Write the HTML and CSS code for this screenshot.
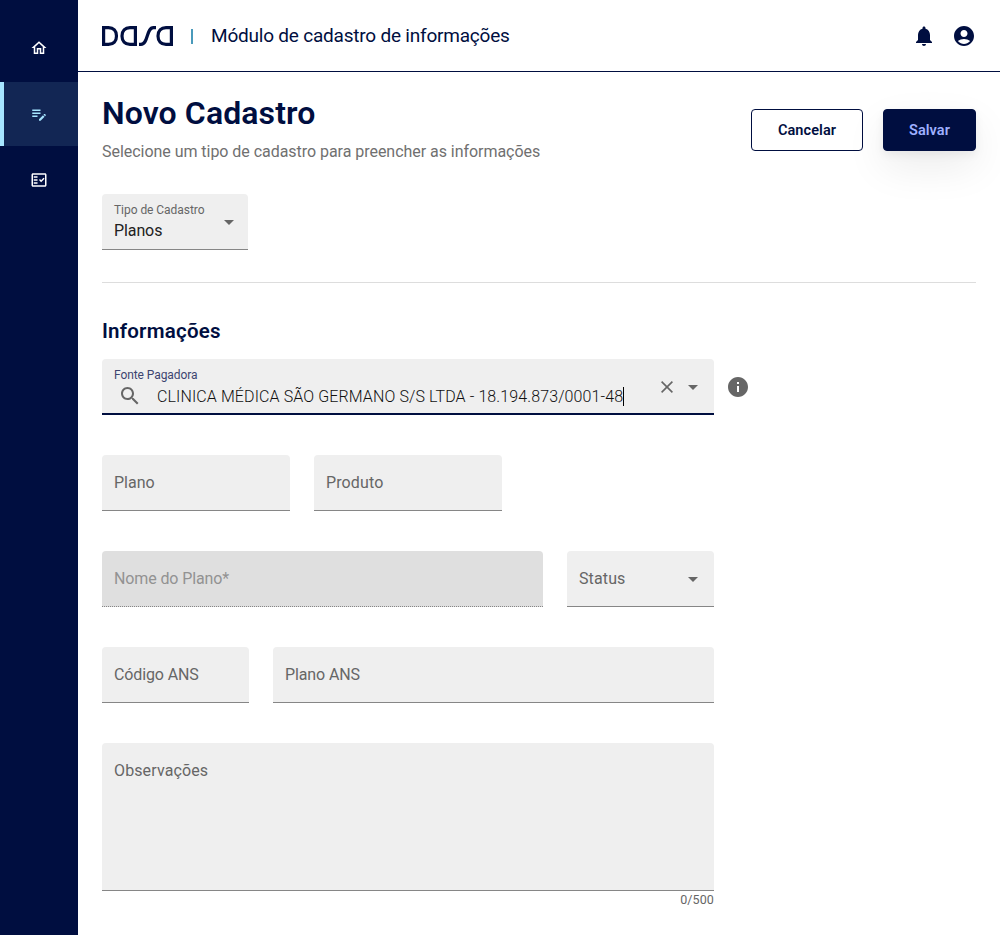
FILE: index.html
```html
<!DOCTYPE html>
<html lang="pt-BR">
<head>
<meta charset="utf-8">
<title>Novo Cadastro</title>
<link rel="stylesheet" href="styles.css">
</head>
<body>
<div class="app">
  <nav class="sidebar">
    <a class="nav-item"><svg width="18" height="18" viewBox="0 0 24 24"><path d="M12 5.690l5 4.500V18h-2v-6H9v6H7v-7.810l5-4.500M12 3L2 12h3v8h6v-6h2v6h6v-8h3L12 3z"/></svg></a>
    <a class="nav-item active"><svg width="18" height="18" viewBox="0 0 24 24"><path d="M3 10h11v2H3v-2zm0-2h11V6H3v2zm0 8h7v-2H3v2zm15.010-3.130l.71-.71c.39-.39 1.020-.39 1.410 0l.71.71c.39.39.39 1.020 0 1.410l-.71.71-2.120-2.120zm-.71.71l-5.300 5.300V21h2.120l5.300-5.300-2.120-2.120z"/></svg></a>
    <a class="nav-item"><svg width="18" height="18" viewBox="0 0 24 24"><path fill-rule="evenodd" d="M20 3H4c-1.100 0-2 .9-2 2v14c0 1.100.9 2 2 2h16c1.100 0 2-.9 2-2V5c0-1.100-.9-2-2-2zm0 16H4V5h16v14zM19.410 10.420L17.990 9l-3.170 3.170-1.410-1.420L12 12.160 14.820 15zM5 7h5v2H5zM5 11h5v2H5zM5 15h5v2H5z"/></svg></a>
  </nav>
  <div class="page">
    <header class="topbar">
      <svg class="logo" width="72" height="20" viewBox="0 0 72 20"><path d="M1.600 1.600H6.500C11.500 1.600 14.500 5 14.500 10S11.500 18.400 6.500 18.400H1.600ZM33.400 1.600H28C23 1.600 20 5 20 10S23 18.400 28 18.400H33.400ZM37 18.400H39C46.500 18.400 44 1.600 51.500 1.600H54M69.400 1.600H64C59 1.600 56 5 56 10S59 18.400 64 18.400H69.400Z"/></svg>
      <span class="divider"></span>
      <span class="module">Módulo de cadastro de informações</span>
      <div class="tools">
        <svg width="24" height="24" viewBox="0 0 24 24"><path d="M12 22c1.100 0 2-.9 2-2h-4c0 1.100.89 2 2 2zm6-6v-5c0-3.070-1.640-5.640-4.500-6.320V4c0-.83-.67-1.500-1.500-1.500s-1.500.67-1.500 1.500v.68C7.630 5.360 6 7.920 6 11v5l-2 2v1h16v-1l-2-2z"/></svg>
        <svg width="24" height="24" viewBox="0 0 24 24"><path d="M12 2C6.480 2 2 6.480 2 12s4.480 10 10 10 10-4.480 10-10S17.520 2 12 2zm0 4c1.930 0 3.500 1.570 3.500 3.500S13.930 13 12 13s-3.500-1.570-3.500-3.500S10.070 6 12 6zm0 14c-2.030 0-4.430-.82-6.140-2.880C7.550 15.800 9.680 15 12 15s4.450.8 6.140 2.120C16.430 19.180 14.030 20 12 20z"/></svg>
      </div>
    </header>
    <main class="content">
      <div class="heading">
        <div>
          <h1>Novo Cadastro</h1>
          <p class="subtitle">Selecione um tipo de cadastro para preencher as informações</p>
        </div>
        <div class="actions">
          <button class="btn outline">Cancelar</button>
          <button class="btn solid">Salvar</button>
        </div>
      </div>
      <div class="field type">
        <div class="stack"><span class="label">Tipo de Cadastro</span><span class="value">Planos</span></div>
        <i class="arrow"></i>
      </div>
      <hr>
      <h2>Informações</h2>
      <div class="payer-row">
        <div class="field focused">
          <div class="stack">
            <span class="label">Fonte Pagadora</span>
            <span class="search"><svg width="24" height="24" viewBox="0 0 24 24"><path d="M15.500 14h-.79l-.28-.27C15.410 12.590 16 11.110 16 9.500 16 5.910 13.090 3 9.500 3S3 5.910 3 9.500 5.910 16 9.500 16c1.610 0 3.090-.59 4.230-1.570l.27.28v.79l5 4.990L20.490 19l-4.990-5zm-6 0C7.010 14 5 11.990 5 9.500S7.010 5 9.500 5 14 7.010 14 9.500 11.990 14 9.500 14z"/></svg><span class="query">CLINICA MÉDICA SÃO GERMANO S/S LTDA - 18.194.873/0001-48</span><i class="caret"></i></span>
          </div>
          <svg class="clear" width="12" height="12" viewBox="0 0 12 12"><path d="M.6.6l10.800 10.800M11.400.6L.6 11.400"/></svg>
          <i class="arrow"></i>
        </div>
        <svg class="info" width="24" height="24" viewBox="0 0 24 24"><path d="M12 2C6.480 2 2 6.480 2 12s4.480 10 10 10 10-4.480 10-10S17.520 2 12 2zm1 15h-2v-6h2v6zm0-8h-2V7h2v2z"/></svg>
      </div>
      <div class="row plan">
        <div class="field"><span class="hint">Plano</span></div>
        <div class="field"><span class="hint wide">Produto</span></div>
      </div>
      <div class="row name">
        <div class="field disabled"><span class="hint tight">Nome do Plano*</span></div>
        <div class="field"><span class="hint wide">Status</span><i class="arrow"></i></div>
      </div>
      <div class="row ans">
        <div class="field"><span class="hint tight">Código ANS</span></div>
        <div class="field"><span class="hint tight">Plano ANS</span></div>
      </div>
      <div class="field area"><span class="hint wide">Observações</span></div>
      <div class="counter">0/500</div>
    </main>
  </div>
</div>
</body>
</html>
```
FILE: styles.css
```css
* { box-sizing: border-box; }
body { margin: 0; background: #fff; color: #000e40; font-family: Roboto, "Liberation Sans", sans-serif; font-size: 16px; }
h1, h2, p { margin: 0; }
svg { display: block; flex: none; fill: currentColor; }
.app { display: flex; width: 1000px; height: 935px; overflow: hidden; }
.sidebar { width: 78px; flex: none; background: #000e40; padding-top: 14px; display: flex; flex-direction: column; gap: 2px; }
.nav-item { height: 64px; display: flex; align-items: center; justify-content: center; color: #fff; padding-top: 2px; }
.nav-item:first-child { height: 66px; }
.nav-item.active { color: #a6e5ff; background: #122654; border-left: 4px solid #a6e5ff; padding-right: 4px; padding-top: 0; }
.nav-item.active + .nav-item { padding-top: 0; }
.page { flex: 1; min-width: 0; }
.topbar { height: 72px; border-bottom: 1px solid #000e40; display: flex; align-items: center; padding: 0 24px; }
.logo { fill: none; stroke: #000e40; stroke-width: 3.2; }
.divider { width: 2px; height: 15px; margin: 1px 18px 0 17px; background: #4a9abb; }
.module { font-size: 19px; letter-spacing: -.21px; white-space: nowrap; }
.tools { margin-left: auto; display: flex; gap: 16px; }
.content { padding: 24px; }
.heading { display: flex; justify-content: space-between; height: 98px; }
h1 { font-size: 32px; line-height: 36px; font-weight: 600; letter-spacing: .1px; white-space: nowrap; margin-top: -1px; }
.subtitle { margin-top: 11px; line-height: 20px; color: #707070; white-space: nowrap; letter-spacing: -.04px; }
.actions { display: flex; gap: 20px; padding-top: 13px; }
.btn { height: 42px; border: 1px solid #000e40; border-radius: 4px; font: 600 14.500px Roboto, sans-serif; letter-spacing: .08px; color: #000e40; background: #fff; padding: 0; }
.outline { width: 112px; }
.solid { width: 93px; background: #000e40; color: #9fb0ff; box-shadow: 0 16px 40px rgba(0,0,0,.08), 0 4px 10px rgba(0,0,0,.06); }
.field { height: 56px; background: #efefef; border-bottom: 1px solid #868686; border-radius: 4px 4px 0 0; padding: 0 12px; display: flex; align-items: center; justify-content: space-between; color: #666; }
.type { width: 146px; }
.stack { display: flex; flex-direction: column; }
.label { font-size: 12px; line-height: 16px; white-space: nowrap; letter-spacing: -.05px; }
.value { line-height: 20px; color: #212121; margin-top: 3px; letter-spacing: -.1px; }
.arrow { flex: none; width: 0; height: 0; border: 5px solid transparent; border-top-color: #666; border-bottom: 0; margin: 2px 4px 0 0; }
.type .arrow { margin-right: 2px; }
hr { border: 0; height: 1px; background: #ddd; margin: 32px 0 36px; }
h2 { font-size: 20.500px; line-height: 24px; font-weight: 600; letter-spacing: .22px; margin-bottom: 16px; }
h2, .query, .hint, .counter { white-space: nowrap; }
.payer-row { display: flex; align-items: center; gap: 12px; }
.focused { width: 612px; border-bottom: 2px solid #000e40; }
.focused .stack { flex: 1; padding-top: 3px; }
.focused .label { color: #3d4570; letter-spacing: -.08px; }
.search { display: flex; align-items: center; height: 24px; margin-top: 1px; padding-left: 4px; }
.query { color: #111; margin-left: 15px; font-weight: 300; letter-spacing: .11px; }
.caret { width: 1px; height: 19px; background: #000; }
.clear { fill: none; stroke: #666; stroke-width: 1.6; margin: 2px 15px 0 0; }
.info { color: #666; }
.row { display: grid; gap: 24px; margin-top: 40px; width: 612px; }
.plan { grid-template-columns: 188px 188px; }
.name { grid-template-columns: 441px 147px; }
.ans { grid-template-columns: 147px 441px; }
.hint { line-height: 20px; margin-top: 1px; }
.wide { letter-spacing: .12px; }
.tight { letter-spacing: -.12px; }
.disabled { background: #dfdfdf; border-bottom-style: dotted; color: #929292; }
.area { width: 612px; height: 148px; margin-top: 40px; align-items: flex-start; padding-top: 17px; }
.counter { width: 612px; font-size: 12.500px; letter-spacing: .1px; line-height: 18px; text-align: right; color: #666; }
```
